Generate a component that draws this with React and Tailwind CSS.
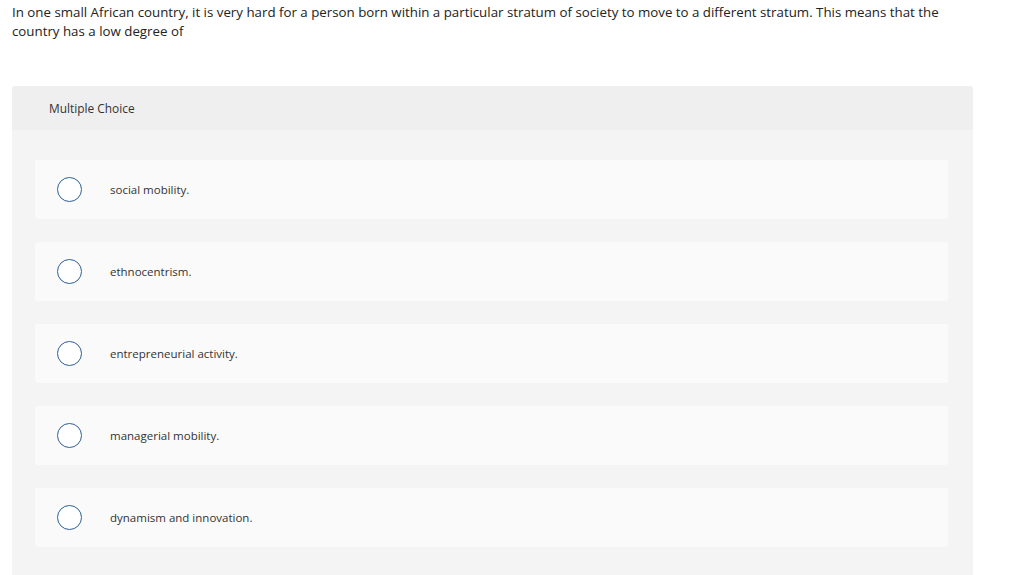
import React from 'react';

const options = [
  'social mobility.',
  'ethnocentrism.',
  'entrepreneurial activity.',
  'managerial mobility.',
  'dynamism and innovation.',
];

export default function App() {
  return (
    <div className="min-h-screen bg-white text-[#222]" style={{ fontFamily: '"Open Sans", Lato, sans-serif' }}>
      <p className="px-3 pt-[3px] text-[13.3px] leading-[18.5px] w-[960px]">
        In one small African country, it is very hard for a person born within a particular stratum of society to move to a different stratum. This means that the country has a low degree of
      </p>
      <div className="ml-3 mt-[46px] w-[961px] bg-[#f4f4f4] rounded-t-[3px]">
        <div className="h-[44px] bg-[#efefef] rounded-t-[3px] flex items-center pl-[37px] pt-[2px] text-[11.9px] text-[#333]">
          Multiple Choice
        </div>
        <div className="pl-[23px] pr-[25px] pt-[30px] pb-[28px] flex flex-col gap-[23px]">
          {options.map((o) => (
            <div key={o} className="h-[59px] bg-[#fafafa] rounded-[3px] flex items-center">
              <span className="ml-[22px] w-[25px] h-[25px] rounded-full border border-[#2e5f96] bg-white shrink-0" />
              <span className="ml-[28px] text-[11.5px] text-[#333]">{o}</span>
            </div>
          ))}
        </div>
      </div>
    </div>
  );
}
